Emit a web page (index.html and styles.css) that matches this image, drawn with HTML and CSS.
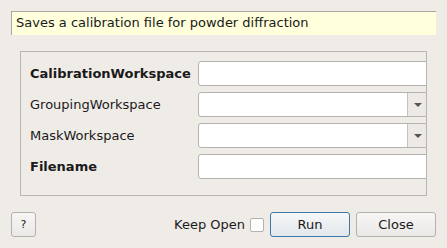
FILE: index.html
```html
<!DOCTYPE html>
<html lang="en">
<head>
    <meta charset="UTF-8">
    <title>SaveCalibration</title>
    <link rel="stylesheet" href="styles.css">
</head>
<body>
    <!-- Algorithm description -->
    <div class="summary">Saves a calibration file for powder diffraction</div>

    <!-- Property rows -->
    <div class="props">
        <div class="props-inner">
            <div class="row">
                <label class="name mandatory">CalibrationWorkspace</label>
                <div class="field"></div>
            </div>
            <div class="row">
                <label class="name">GroupingWorkspace</label>
                <div class="field combo"><span class="drop"><span class="arrow"></span></span></div>
            </div>
            <div class="row">
                <label class="name">MaskWorkspace</label>
                <div class="field combo"><span class="drop"><span class="arrow"></span></span></div>
            </div>
            <div class="row">
                <label class="name mandatory">Filename</label>
                <div class="field"></div>
            </div>
        </div>
    </div>

    <!-- Buttons -->
    <div class="buttons">
        <button class="btn help">?</button>
        <span class="keep">Keep Open</span>
        <span class="check"></span>
        <button class="btn run">Run</button>
        <button class="btn">Close</button>
    </div>
</body>
</html>
```
FILE: styles.css
```css
body {margin: 0;background-color: #efebe7;font-family: "DejaVu Sans", sans-serif;font-size: 13px;color: #1a1a1a;width: 447px;height: 248px;overflow: hidden;}
.summary {margin: 11px 11px 0 11px;height: 24px;box-sizing: border-box;background-color: #ffffdc;border-top: 1px solid #a8a5a2;border-left: 1px solid #a8a5a2;padding-left: 4px;line-height: 22px;}
.props {margin: 16px 0 0 20px;width: 407px;height: 145px;box-sizing: border-box;border: 1px solid #b7b4b1;overflow: hidden;}
.props-inner {width: 460px;padding: 9px 0 0 9px;display: flex;flex-direction: column;gap: 6px;}
.row {display: flex;align-items: center;height: 25px;}
.name {width: 168px;flex-shrink: 0;}
.mandatory {font-weight: bold;}
.field {width: 240px;height: 25px;box-sizing: border-box;background-color: #fff;border: 1px solid #b4b1ae;border-radius: 3px;flex-shrink: 0;position: relative;}
.combo .drop {position: absolute;left: 208px;top: 0;bottom: 0;right: 0;background-color: #ece9e6;border-left: 1px solid #c4c1be;}
.combo .arrow {position: absolute;left: 6px;top: 10px;width: 0;height: 0;border-left: 4px solid transparent;border-right: 4px solid transparent;border-top: 4px solid #555;}
.buttons {display: flex;align-items: center;margin: 16px 11px 0 11px;height: 25px;}
.btn {font-family: inherit;font-size: 13px;color: #1a1a1a;height: 25px;width: 80px;box-sizing: border-box;border: 1px solid #b4b1ae;border-radius: 3px;background: linear-gradient(#f7f6f5, #ebe9e7);padding: 0;}
.btn.help {width: 25px;margin-right: auto;font-size: 11px;}
.btn.run {border-color: #3c78a8;background: linear-gradient(#f6f7f8, #e2e7eb);margin-right: 6px;}
.keep {margin-right: 5px;}
.check {width: 14px;height: 14px;box-sizing: border-box;border: 1px solid #b4b1ae;border-radius: 2px;background-color: #fff;margin-right: 6px;}
```
